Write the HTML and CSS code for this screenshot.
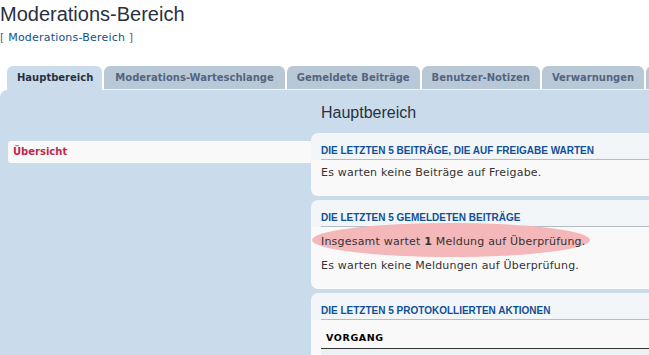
FILE: index.html
```html
<!DOCTYPE html>
<html lang="de">
<head>
  <meta charset="UTF-8">
  <meta name="viewport" content="width=device-width, initial-scale=1.0">
  <title>Moderations-Bereich</title>
  <link rel="stylesheet" href="styles.css">
</head>
<body>

<div class="page">
  <h2 class="page-title">Moderations-Bereich</h2>
  <p class="crumbs">[ <a href="#">Moderations-Bereich</a> ]</p>

  <ul class="tabs">
    <li class="active"><a href="#">Hauptbereich</a></li>
    <li><a href="#">Moderations-Warteschlange</a></li>
    <li><a href="#">Gemeldete Beiträge</a></li>
    <li><a href="#">Benutzer-Notizen</a></li>
    <li><a href="#">Verwarnungen</a></li>
    <li><a href="#">Protokoll</a></li>
  </ul>

  <div class="tab-panel">
    <div class="menu">
      <ul>
        <li class="current"><a href="#">Übersicht</a></li>
      </ul>
    </div>

    <div class="main">
      <h2 class="main-title">Hauptbereich</h2>

      <div class="panel">
        <h3>Die letzten 5 Beiträge, die auf Freigabe warten</h3>
        <p class="first">Es warten keine Beiträge auf Freigabe.</p>
      </div>

      <div class="panel">
        <h3>Die letzten 5 gemeldeten Beiträge</h3>
        <p class="marked"><span class="mark"></span>Insgesamt wartet <strong>1</strong> Meldung auf Überprüfung.</p>
        <p class="next">Es warten keine Meldungen auf Überprüfung.</p>
      </div>

      <div class="panel">
        <h3>Die letzten 5 protokollierten Aktionen</h3>
        <table class="log">
          <thead>
            <tr><th>Vorgang</th></tr>
          </thead>
          <tbody>
            <tr><td>Keine Einträge vorhanden.</td></tr>
          </tbody>
        </table>
      </div>
    </div>
  </div>
</div>

</body>
</html>
```

FILE: styles.css
```css
html {
  overflow: hidden;
}

body {
  margin: 0;
  background-color: #fff;
  font-family: "DejaVu Sans", Verdana, sans-serif;
  font-size: 11px;
  letter-spacing: 0.2px;
  color: #333;
}

.page {
  width: 1000px;
}

.page-title {
  margin: 0;
  padding-top: 2px;
  font: normal 20px/24px "Liberation Sans", Arial, sans-serif;
  letter-spacing: 0;
  color: #28313f;
}

.crumbs {
  margin: 4px 0 0;
  line-height: 16px;
  color: #536482;
}

.crumbs a {
  color: #105289;
  text-decoration: none;
}

/* tabs */
.tabs {
  list-style: none;
  margin: 20px 0 0;
  padding: 0 0 0 7px;
  display: flex;
  gap: 2px;
}

.tabs a {
  display: block;
  height: 23px;
  line-height: 23px;
  padding: 0 10px;
  background-color: #b9c8d6;
  border-bottom: 1px solid #eef3f7;
  border-radius: 6px 6px 0 0;
  font-size: 10px;
  font-weight: bold;
  letter-spacing: 0;
  color: #536482;
  text-decoration: none;
  white-space: nowrap;
}

.tabs li:first-child a {
  padding: 0 9px 0 10px;
}

.tabs li:nth-child(2) a {
  padding: 0 11px;
}

.tabs li:last-child a {
  padding-left: 14px;
}

.tabs .active a {
  background-color: #cadceb;
  border-bottom-color: #cadceb;
  color: #28313f;
}

/* panel under tabs */
.tab-panel {
  display: flex;
  background-color: #cadceb;
  border-radius: 7px 0 0 0;
  padding: 13px 0 0 8px;
}

.menu {
  width: 303px;
  padding-top: 38px;
}

.menu ul {
  list-style: none;
  margin: 0;
  padding: 0;
}

.menu li a {
  display: block;
  height: 22px;
  line-height: 22px;
  padding-left: 5px;
  background-color: #f9f9f9;
  border-radius: 3px 0 0 3px;
  font-size: 10px;
  font-weight: bold;
  letter-spacing: 0;
  color: #bc2a4d;
  text-decoration: none;
}

.main {
  flex: 1;
}

.main-title {
  margin: 0 0 10px 10px;
  font: normal 16px/20px "Liberation Sans", Arial, sans-serif;
  letter-spacing: 0;
  color: #28313f;
}

.panel {
  margin-bottom: 4px;
  padding: 11px 10px 15px;
  background: linear-gradient(#f3f6f9 0, #f3f6f9 27px, #f9f9f9 27px);
  border-radius: 7px 0 0 7px;
}

.panel h3 {
  margin: 0;
  padding-bottom: 1px;
  border-bottom: 1px solid #b4bcc4;
  font: bold 10px/14px "Liberation Sans", Arial, sans-serif;
  letter-spacing: 0;
  text-transform: uppercase;
  color: #115098;
}

.panel p {
  margin: 0;
  line-height: 16px;
}

.panel p.first {
  margin-top: 5px;
}

.panel p.marked {
  position: relative;
  z-index: 0;
  margin-top: 7px;
}

.panel p.next {
  margin-top: 8px;
}

/* pink highlight drawn over the screenshot */
.mark {
  position: absolute;
  left: -9px;
  top: -11px;
  width: 278px;
  height: 34px;
  border-radius: 50%;
  background-color: #f4b8ba;
  z-index: -1;
}

.log {
  width: 100%;
  margin-top: 6px;
  border-collapse: collapse;
}

.log th {
  padding: 5px 5px 3px;
  border-bottom: 1px solid #333;
  line-height: 14px;
  text-align: left;
  text-transform: uppercase;
  font-size: 9.5px;
  font-weight: bold;
  letter-spacing: 0.6px;
  color: #000;
}

.log td {
  padding: 16px 5px 10px;
  background-color: #ecf1f4;
}
```
